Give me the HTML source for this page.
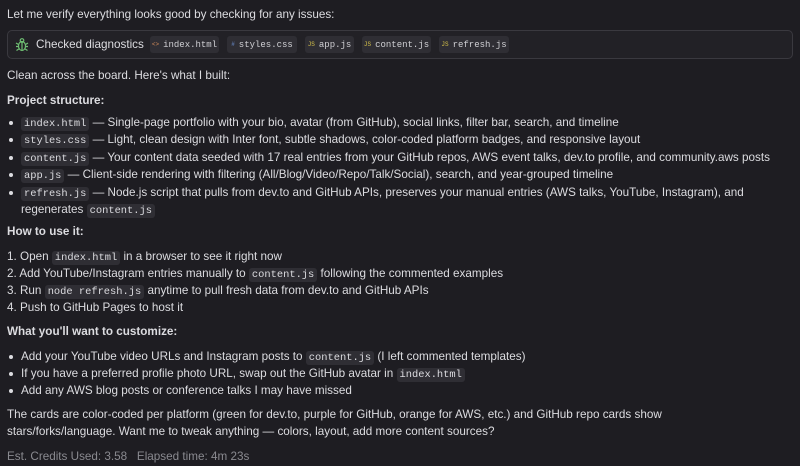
<!DOCTYPE html>
<html><head><meta charset="utf-8"><style>
html,body{margin:0;padding:0;background:#1e1d22;width:800px;height:466px;overflow:hidden}
body{font-family:"Liberation Sans",sans-serif;font-size:11.7px;color:#dcdce0;position:relative}
#w{position:absolute;left:0;top:1px;width:800px;height:465px}
.l{position:absolute;left:7px;line-height:18px;white-space:nowrap}
.b{font-weight:bold}
code{font-family:"Liberation Mono",monospace;font-size:10.4px;background:#2f2e34;border-radius:3px;padding:1px 3px;color:#dcdce0}
.dot{position:absolute;left:9px;width:4px;height:4px;border-radius:2px;background:#dcdce0}
.box{position:absolute;left:7px;top:29px;width:784px;height:27px;border:1px solid #3a393f;border-radius:5px;background:#222126}
.chip{position:absolute;top:5px;height:17px;line-height:17px;background:#2f2e34;border-radius:3px;font-family:"Liberation Mono",monospace;font-size:9px;color:#d0d0d4;text-align:center}
.ic{font-size:6px;margin-right:4px;vertical-align:1px}
</style></head><body><div id="w">
<div class="l" style="top:5px">Let me verify everything looks good by checking for any issues:</div>
<div class="box">
<svg style="position:absolute;left:7px;top:6px" width="14" height="15" viewBox="0 0 14 15" fill="none" stroke="#6fbf73" stroke-width="1.2"><ellipse cx="7" cy="9" rx="3.5" ry="4.5"/><circle cx="7" cy="3.5" r="1.8"/><path d="M7 5v8M1 6l2.5 1.5M13 6l-2.5 1.5M1 9.5h2.5M13 9.5h-2.5M1.5 13.5l2.3-1.5M12.5 13.5l-2.3-1.5"/></svg>
<div style="position:absolute;left:28px;top:5px;font-size:11.7px;line-height:18px">Checked diagnostics</div>
<div class="chip" style="left:142px;width:69px"><span class="ic" style="color:#d08a5a">&lt;&gt;</span>index.html</div>
<div class="chip" style="left:219px;width:70px"><span class="ic" style="color:#6a8fd0">#</span>styles.css</div>
<div class="chip" style="left:297px;width:49px"><span class="ic" style="color:#d6c24a">JS</span>app.js</div>
<div class="chip" style="left:354px;width:69px"><span class="ic" style="color:#d6c24a">JS</span>content.js</div>
<div class="chip" style="left:431px;width:70px"><span class="ic" style="color:#d6c24a">JS</span>refresh.js</div>
</div>
<div class="l" style="top:66px">Clean across the board. Here's what I built:</div>
<div class="l b" style="top:91px">Project structure:</div>
<div class="dot" style="top:120px"></div><div class="l" style="top:113px;left:21px"><code>index.html</code> — Single-page portfolio with your bio, avatar (from GitHub), social links, filter bar, search, and timeline</div>
<div class="dot" style="top:137px"></div><div class="l" style="top:130px;left:21px"><code>styles.css</code> — Light, clean design with Inter font, subtle shadows, color-coded platform badges, and responsive layout</div>
<div class="dot" style="top:155px"></div><div class="l" style="top:148px;left:21px"><code>content.js</code> — Your content data seeded with 17 real entries from your GitHub repos, AWS event talks, dev.to profile, and community.aws posts</div>
<div class="dot" style="top:172px"></div><div class="l" style="top:165px;left:21px"><code>app.js</code> — Client-side rendering with filtering (All/Blog/Video/Repo/Talk/Social), search, and year-grouped timeline</div>
<div class="dot" style="top:190px"></div><div class="l" style="top:183px;left:21px"><code>refresh.js</code> — Node.js script that pulls from dev.to and GitHub APIs, preserves your manual entries (AWS talks, YouTube, Instagram), and</div>
<div class="l" style="top:200px;left:21px">regenerates <code>content.js</code></div>
<div class="l b" style="top:222px">How to use it:</div>
<div class="l" style="top:247px">1. Open <code>index.html</code> in a browser to see it right now</div>
<div class="l" style="top:264px">2. Add YouTube/Instagram entries manually to <code>content.js</code> following the commented examples</div>
<div class="l" style="top:281px">3. Run <code>node refresh.js</code> anytime to pull fresh data from dev.to and GitHub APIs</div>
<div class="l" style="top:298px">4. Push to GitHub Pages to host it</div>
<div class="l b" style="top:322px">What you'll want to customize:</div>
<div class="dot" style="top:354px"></div><div class="l" style="top:347px;left:21px">Add your YouTube video URLs and Instagram posts to <code>content.js</code> (I left commented templates)</div>
<div class="dot" style="top:371px"></div><div class="l" style="top:364px;left:21px">If you have a preferred profile photo URL, swap out the GitHub avatar in <code>index.html</code></div>
<div class="dot" style="top:388px"></div><div class="l" style="top:381px;left:21px">Add any AWS blog posts or conference talks I may have missed</div>
<div class="l" style="top:405px">The cards are color-coded per platform (green for dev.to, purple for GitHub, orange for AWS, etc.) and GitHub repo cards show</div>
<div class="l" style="top:422px">stars/forks/language. Want me to tweak anything — colors, layout, add more content sources?</div>
<div class="l" style="top:447px;color:#8a8a90">Est. Credits Used: 3.58&nbsp;&nbsp;&nbsp;Elapsed time: 4m 23s</div>
</div></body></html>
